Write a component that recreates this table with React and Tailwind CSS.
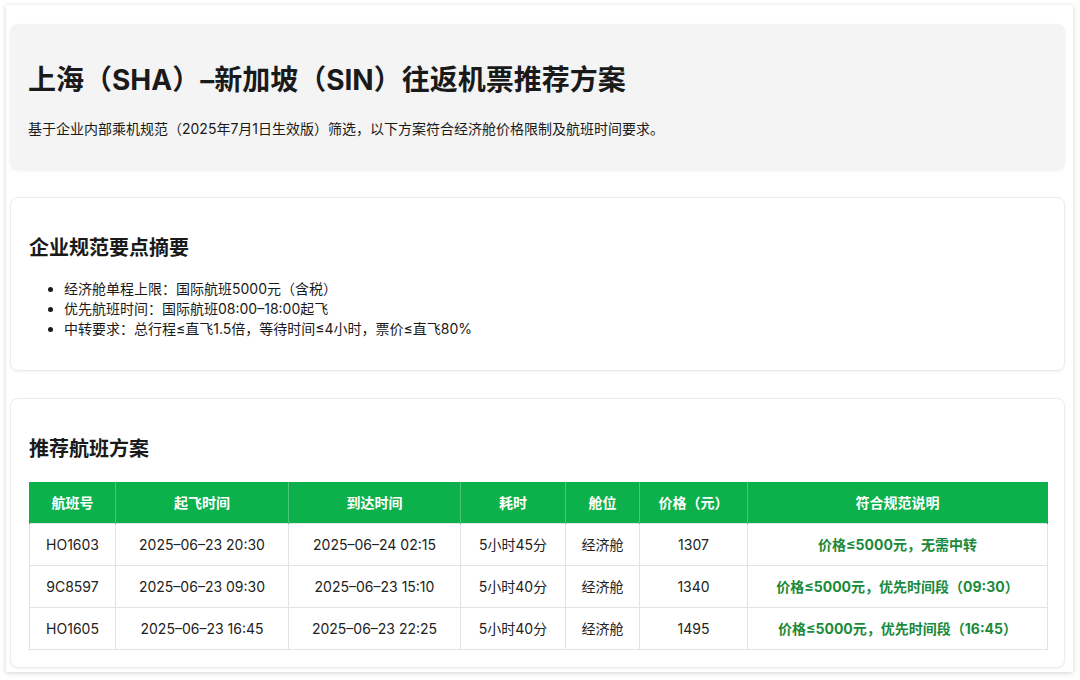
import React from "react";

const cols = [86, 173, 172, 105, 74, 108, 300];
const headers = ["航班号", "起飞时间", "到达时间", "耗时", "舱位", "价格（元）", "符合规范说明"];
const rows = [
  ["HO1603", "2025–06–23 20:30", "2025–06–24 02:15", "5小时45分", "经济舱", "1307", "价格≤5000元，无需中转"],
  ["9C8597", "2025–06–23 09:30", "2025–06–23 15:10", "5小时40分", "经济舱", "1340", "价格≤5000元，优先时间段（09:30）"],
  ["HO1605", "2025–06–23 16:45", "2025–06–23 22:25", "5小时40分", "经济舱", "1495", "价格≤5000元，优先时间段（16:45）"],
];

export default function App() {
  return (
    <div
      className="w-[1080px] h-[680px] bg-white pt-[5px] pl-[6px] text-[#1a1a1a]"
      style={{ fontFamily: 'Inter, "Noto Sans CJK SC", sans-serif' }}
    >
      <div className="w-[1067px] h-[667px] bg-white shadow-[0_1px_5px_rgba(0,0,0,0.18)] pl-[4px] pr-[8px] pt-[19px]">
        <div className="w-[1055px] flex flex-col gap-[27px]">
          <div className="bg-[#f4f4f4] rounded-lg shadow-[0_1px_3px_rgba(0,0,0,0.06)] pt-[39px] pb-[31px] px-[18px]">
            <h1 className="text-[28px] leading-[34px] font-bold">上海（SHA）–新加坡（SIN）往返机票推荐方案</h1>
            <p className="mt-[22px] text-[14px] leading-[20px]">基于企业内部乘机规范（2025年7月1日生效版）筛选，以下方案符合经济舱价格限制及航班时间要求。</p>
          </div>

          <div className="bg-white rounded-lg border border-[#ececec] shadow-[0_1px_3px_rgba(0,0,0,0.05)] pt-[36px] pb-[31px] px-[18px]">
            <h2 className="text-[20px] leading-[28px] font-bold">企业规范要点摘要</h2>
            <ul className="mt-[17px] list-disc pl-[35px] text-[14px] leading-[20px]">
              <li>经济舱单程上限：国际航班5000元（含税）</li>
              <li>优先航班时间：国际航班08:00–18:00起飞</li>
              <li>中转要求：总行程≤直飞1.5倍，等待时间≤4小时，票价≤直飞80%</li>
            </ul>
          </div>

          <div className="bg-white rounded-lg border border-[#ececec] shadow-[0_1px_3px_rgba(0,0,0,0.05)] pt-[36px] pb-[17px] pl-[18px] pr-[17px]">
            <h2 className="text-[20px] leading-[28px] font-bold">推荐航班方案</h2>
            <table className="mt-[19px] border-collapse text-[14px] table-fixed w-[1018px]">
              <colgroup>
                {cols.map((w, i) => (
                  <col key={i} style={{ width: w }} />
                ))}
              </colgroup>
              <thead>
                <tr className="bg-[#0db14b] text-white h-[41px]">
                  {headers.map((h, i) => (
                    <th key={i} className="font-bold border-x border-[#4cc77a] first:border-l-[#0db14b] last:border-r-[#0db14b] text-center">{h}</th>
                  ))}
                </tr>
              </thead>
              <tbody>
                {rows.map((r, ri) => (
                  <tr key={ri} className="h-[42px]">
                    {r.map((c, ci) => (
                      <td
                        key={ci}
                        className={
                          ci === 6
                            ? "border border-[#e3e3e3] text-center font-bold text-[#1b8a3a]"
                            : "border border-[#e3e3e3] text-center text-[#222]"
                        }
                      >
                        {c}
                      </td>
                    ))}
                  </tr>
                ))}
              </tbody>
            </table>
          </div>
        </div>
      </div>
    </div>
  );
}
